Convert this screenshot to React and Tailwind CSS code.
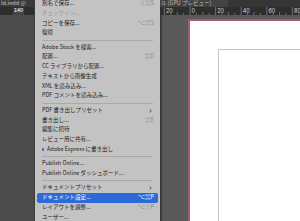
import React from 'react';

const items = [
  { label: '別名で保存...', sc: '⇧⌘S' },
  { label: 'チェックイン...', disabled: true },
  { label: 'コピーを保存...', sc: '⌥⌘S' },
  { label: '復帰' },
  'sep',
  { label: 'Adobe Stock を検索...' },
  { label: '配置...', sc: '⌘D' },
  { label: 'CC ライブラリから配置...' },
  { label: 'テキストから画像生成' },
  { label: 'XML を読み込み...' },
  { label: 'PDF コメントを読み込み...' },
  'sep',
  { label: 'PDF 書き出しプリセット', sub: true },
  { label: '書き出し...', sc: '⌘E' },
  { label: '編集に招待' },
  { label: 'レビュー用に共有...' },
  { label: 'Adobe Express に書き出し', dot: true },
  'sep',
  { label: 'Publish Online...' },
  { label: 'Publish Online ダッシュボード...' },
  'sep',
  { label: 'ドキュメントプリセット', sub: true },
  { label: 'ドキュメント設定...', sc: '⌥⌘P', active: true },
  { label: 'レイアウトを調整...', sc: '⌥⇧P' },
  { label: 'ユーザー...' },
];

const Ruler = () => {
  // majors every 25.6px, 0 sits on the page edge (local x = 30)
  const ticks = [];
  for (let i = -1; i < 22; i++) {
    const x = 4.4 + i * 6.4;
    const kind = ((i % 4) + 4) % 4;
    const h = kind === 0 ? 8 : kind === 2 ? 3 : 2;
    ticks.push(<line key={i} x1={x} x2={x} y1={8 - h} y2={8} stroke="#9a9a9a" strokeWidth="0.6" />);
  }
  const labels = [
    [4.4, '20'],
    [30, '0'],
    [55.6, '20'],
    [81.2, '40'],
    [106.8, '60'],
    [132.4, '80'],
  ];
  return (
    <svg width="140" height="8" viewBox="0 0 140 8" className="block">
      {ticks}
      {labels.map(([x, t]) => (
        <text key={x} x={x + 1.6} y="5.6" fontSize="5.5" fill="#d4d4d4" fontFamily="Inter, sans-serif">
          {t}
        </text>
      ))}
    </svg>
  );
};

const Chevron = () => (
  <svg width="3" height="4" viewBox="0 0 3 4" className="mr-[2px]">
    <path d="M0.6 0.4 L2.3 2 L0.6 3.6" fill="none" stroke="#2a2a2a" strokeWidth="0.7" />
  </svg>
);

const MenuRow = ({ item }) => {
  if (item === 'sep') {
    return (
      <div className="h-[4.6px] flex items-center px-[7px]">
        <div className="h-px w-full bg-[#aaaaaa]" />
      </div>
    );
  }
  const base = item.active
    ? 'bg-[#2c6ad9] text-white rounded-[2px]'
    : item.disabled
    ? 'text-[#979797]'
    : 'text-[#222222]';
  return (
    <div className={`h-[9.75px] mx-[2px] flex items-center pl-[5px] pr-[4px] leading-none ${base}`}>
      {item.dot && <span className="w-[2.5px] h-[2.5px] rounded-full bg-[#2f5fe6] mr-[3px] -ml-[0.5px]" />}
      <span className="flex-1 whitespace-nowrap">{item.label}</span>
      {item.sc && (
        <span className={`whitespace-nowrap ${item.active ? 'text-white' : 'text-[#8c8c8c]'}`}>{item.sc}</span>
      )}
      {item.sub && <Chevron />}
    </div>
  );
};

export default function App() {
  return (
    <div className="relative w-[300px] h-[221px] overflow-hidden flex flex-col bg-[#4b4b4b] font-['Noto_Sans_CJK_JP','Noto_Sans',sans-serif] text-[5.5px]">
      {/* title bar */}
      <div className="h-[7px] flex items-center bg-[#3a3a3a] leading-none">
        <div className="w-[160px] text-[#cfcfcf] pl-[1px] whitespace-nowrap">ld.indd @</div>
        <div className="w-[68px] h-full flex items-center bg-[#434343] text-[#bdbdbd] pl-[1px] whitespace-nowrap">
          ル [GPU プレビュー]
        </div>
        <div className="flex-1 h-full bg-[#353535]" />
      </div>

      {/* ruler */}
      <div className="h-[8px] flex bg-[#2e2e2e]">
        <div className="w-[160px] flex items-center">
          <span className="ml-[13px] px-[1px] h-[7px] flex items-center bg-[#454545] text-white leading-none">140</span>
        </div>
        <Ruler />
      </div>

      {/* canvas */}
      <div className="flex-1 flex">
        <div className="w-[160px] bg-[#4b4b4b]" />
        <div className="w-[2px] bg-[#3b3b3b]" />
        <div className="flex-1 bg-[#595959] pl-[26px] pt-[4px]">
          <div className="h-full bg-white border-l-2 border-t-2 border-[#a35c6c] pl-[28px] pt-[28px]">
            <div className="h-full border-l border-t border-[#cdbfd2]" />
          </div>
        </div>
      </div>

      {/* File menu */}
      <div className="absolute left-[34px] top-[-1px] w-[126px] h-[240px] bg-[#c3c3c3] border-l border-[#3c3c3c]">
        {items.map((item, i) => (
          <MenuRow key={i} item={item} />
        ))}
      </div>
    </div>
  );
}
